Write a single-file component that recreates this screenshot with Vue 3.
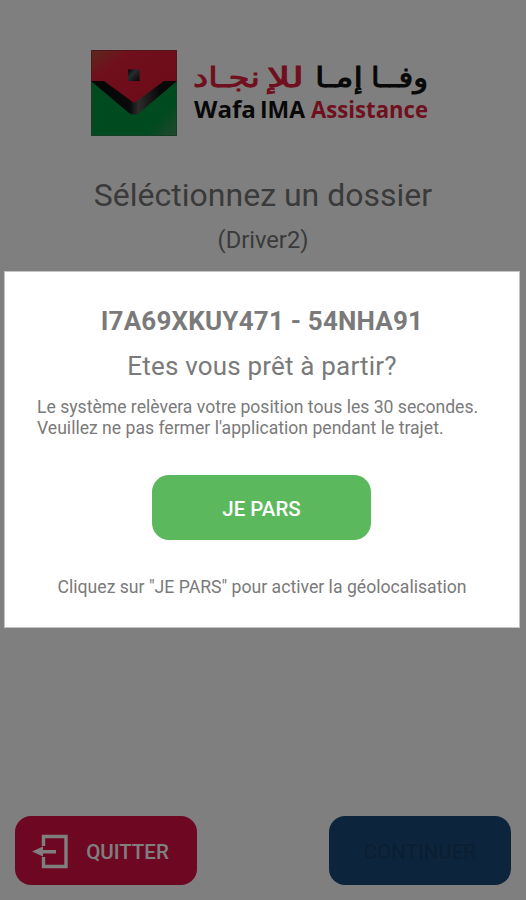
<template>
    <div class="screen">
        <div class="header">
            <svg class="logo" width="346" height="94" viewBox="0 0 346 94">
                <defs>
                    <linearGradient id="red" x1="0" y1="0" x2="1" y2="1">
                        <stop offset="0" stop-color="#b8543e" />
                        <stop offset="0.25" stop-color="#e02038" />
                        <stop offset="1" stop-color="#dc142f" />
                    </linearGradient>
                    <linearGradient id="green" x1="0" y1="0" x2="1" y2="1">
                        <stop offset="0.8" stop-color="#009440" />
                        <stop offset="1" stop-color="#4a9060" />
                    </linearGradient>
                    <linearGradient id="black" x1="0" y1="0" x2="1" y2="0">
                        <stop offset="0" stop-color="#0a0a0a" />
                        <stop offset="0.45" stop-color="#141414" />
                        <stop offset="0.55" stop-color="#585858" />
                        <stop offset="0.8" stop-color="#101010" />
                    </linearGradient>
                    <linearGradient id="gem" x1="0" y1="0" x2="1" y2="1">
                        <stop offset="0" stop-color="#080808" />
                        <stop offset="0.4" stop-color="#505860" />
                        <stop offset="1" stop-color="#080808" />
                    </linearGradient>
                </defs>
                <rect x="1" y="5" width="86" height="86" fill="url(#green)" />
                <path d="M1 5H87V37H74L44 63L14 37H1Z" fill="url(#red)" />
                <path d="M1 36H14L44 58L74 36H87L49 68Q44 71 39 68Z" fill="url(#black)" />
                <rect x="38" y="24.5" width="11.5" height="11.5" fill="url(#gem)" />
                <path d="M1.5 36V5.5H86.5V36" fill="none" stroke="#a02c38" />
                <path d="M1.5 37V90.5H86.5V37" fill="none" stroke="#287c48" />
                <g class="arabic">
                    <text x="103" y="41.5" textLength="67" lengthAdjust="spacingAndGlyphs" class="crimson">نجـاد</text>
                    <text x="177" y="41.5" textLength="37" lengthAdjust="spacingAndGlyphs" class="crimson">للإ</text>
                    <text x="225" y="41.5" textLength="48" lengthAdjust="spacingAndGlyphs" class="dark">إمـا</text>
                    <text x="281" y="41.5" textLength="57" lengthAdjust="spacingAndGlyphs" class="dark">وفــا</text>
                </g>
                <g class="latin">
                    <text x="104" y="72.5" textLength="62" lengthAdjust="spacingAndGlyphs" class="dark">Wafa</text>
                    <text x="170" y="72.5" textLength="45" lengthAdjust="spacingAndGlyphs" class="dark">IMA</text>
                    <text x="221" y="72.5" textLength="117" lengthAdjust="spacingAndGlyphs" class="crimson">Assistance</text>
                </g>
            </svg>
            <div class="title">Séléctionnez un dossier</div>
            <div class="driver">({{ driver }})</div>
        </div>
        <div class="footer">
            <button class="btn quit">
                <svg width="36" height="36" viewBox="0 0 36 36">
                    <path d="M11.5 12V2.5H34V32.5H11.5V23" fill="none" stroke="#fff" stroke-width="3.4" />
                    <path d="M0 17.5L11 12.5V16H24V19.5H11V22.5Z" fill="#fff" />
                </svg>
                <span>QUITTER</span>
            </button>
            <button class="btn next" disabled>CONTINUER</button>
        </div>

        <div v-if="open" class="overlay">
            <div class="modal">
                <div class="ref">{{ dossier }} - {{ plate }}</div>
                <div class="question">Etes vous prêt à partir?</div>
                <div class="info">
                    <div>Le système relèvera votre position tous les 30 secondes.</div>
                    <div>Veuillez ne pas fermer l'application pendant le trajet.</div>
                </div>
                <button class="go" @click="open = false">JE PARS</button>
                <div class="hint">Cliquez sur "JE PARS" pour activer la géolocalisation</div>
            </div>
        </div>
    </div>
</template>

<script setup>
import { ref } from 'vue';

const driver = 'Driver2';
const dossier = 'I7A69XKUY471';
const plate = '54NHA91';
const open = ref(true);
</script>

<style>
body {
    margin: 0;
}
</style>

<style scoped>
.screen {
    position: relative;
    display: flex;
    flex-direction: column;
    justify-content: space-between;
    width: 526px;
    height: 900px;
    overflow: hidden;
    background-color: #fff;
    color: #757575;
    font-family: Roboto, "Liberation Sans", sans-serif;
    white-space: nowrap;
}

.header {
    display: flex;
    flex-direction: column;
    align-items: center;
    padding-top: 44.5px;
}

.logo {
    display: block;
    overflow: visible;
}

.arabic text {
    font-family: "DejaVu Sans", sans-serif;
    font-size: 28px;
    stroke-width: 0.9px;
}

.latin text {
    font-family: "Open Sans", sans-serif;
    font-size: 24px;
    font-weight: bold;
}

.crimson {
    fill: #e01e3c;
    stroke: #e01e3c;
    stroke-width: 0;
}

.dark {
    fill: #111;
    stroke: #111;
    stroke-width: 0;
}

.title {
    margin-top: 36.5px;
    font-size: 32px;
    line-height: 40px;
}

.driver {
    margin-top: 10px;
    font-size: 23.7px;
    line-height: 30px;
}

.footer {
    display: flex;
    justify-content: space-between;
    padding: 0 15px 15px;
}

.btn {
    display: flex;
    align-items: center;
    justify-content: center;
    box-sizing: border-box;
    width: 182px;
    height: 69px;
    padding: 2px 0 0;
    border: none;
    border-radius: 16px;
    font-family: inherit;
    font-size: 20.5px;
    font-weight: 500;
}

.quit {
    gap: 18px;
    padding-right: 11px;
    background-color: #dc0e44;
    color: #fff;
}

.next {
    background-color: #1a4a78;
    color: #173f66;
}

.overlay {
    position: absolute;
    inset: 0;
    background-color: rgba(0, 0, 0, 0.5);
}

.modal {
    display: flex;
    flex-direction: column;
    align-items: center;
    box-sizing: border-box;
    width: 516px;
    height: 357px;
    margin: 271px 0 0 4px;
    padding-top: 33px;
    border: 1px solid #c4c4c4;
    background-color: #fff;
    color: #7a7a7a;
}

.ref {
    font-size: 26px;
    font-weight: bold;
    line-height: 32px;
    letter-spacing: 0.2px;
}

.question {
    margin-top: 13px;
    font-size: 26px;
    line-height: 32px;
    letter-spacing: 0.18px;
}

.info {
    align-self: flex-start;
    margin: 15px 0 0 32px;
    font-size: 17.6px;
    line-height: 20.5px;
}

.go {
    width: 219px;
    height: 65px;
    margin: 37px 1px 0 0;
    padding: 2px 0 0;
    border: none;
    border-radius: 17px;
    background-color: #5cb85c;
    color: #fff;
    font-family: inherit;
    font-size: 20.5px;
    font-weight: 500;
}

.hint {
    margin-top: 36px;
    font-size: 17.65px;
    line-height: 22px;
}
</style>
